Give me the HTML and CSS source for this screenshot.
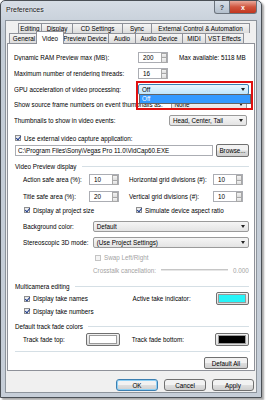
FILE: index.html
```html
<!DOCTYPE html>
<html lang="en">
<head>
  <meta charset="UTF-8" />
  <title>Preferences</title>
  <link rel="stylesheet" href="styles.css">
</head>
<body>
  <div class="win">
    <div class="titlebar">
      <span class="title">Preferences</span>
      <div class="caps">
        <span class="cap help">?</span>
        <span class="cap close">x</span>
      </div>
    </div>

    <div class="client">
      <div class="tabrow r1">
        <span class="tab w24">Editing</span>
        <span class="tab w32">Display</span>
        <span class="tab w51">CD Settings</span>
        <span class="tab w30">Sync</span>
        <span class="tab w99">External Control &amp; Automation</span>
      </div>
      <div class="tabrow r2">
        <span class="tab w30">General</span>
        <span class="tab w28 sel">Video</span>
        <span class="tab w48">Preview Device</span>
        <span class="tab w28">Audio</span>
        <span class="tab w48">Audio Device</span>
        <span class="tab w24">MIDI</span>
        <span class="tab w39">VST Effects</span>
      </div>

      <div class="page">
        <div class="row h14 mt6">
          <span class="lbl">Dynamic RAM Preview max (MB):</span>
          <span class="spin"><span class="val">200</span><span class="arrows"><i></i><i></i></span></span>
          <span class="note">Max available: 5118 MB</span>
        </div>
        <div class="row h14 mt2">
          <span class="lbl">Maximum number of rendering threads:</span>
          <span class="spin"><span class="val">16</span><span class="arrows"><i></i><i></i></span></span>
        </div>
        <div class="row h14 mt2">
          <span class="lbl">GPU acceleration of video processing:</span>
          <span class="combo gpu focus">Off<b></b></span>
        </div>
        <div class="row h14 mt1">
          <span class="lbl clip">Show source frame numbers on event thumbnails as:</span>
          <span class="combo short">None<b></b></span>
        </div>
        <div class="row h14 mt2">
          <span class="lbl">Thumbnails to show in video events:</span>
          <span class="combo short">Head, Center, Tail<b></b></span>
        </div>
        <div class="row h12 mt5">
          <span class="chk on"></span>
          <span>Use external video capture application:</span>
        </div>
        <div class="row h13">
          <span class="edit">C:\Program Files\Sony\Vegas Pro 11.0\VidCap60.EXE</span>
          <span class="btn browse">Browse...</span>
        </div>
        <div class="row h12 mt3 head">
          <span>Video Preview display</span><span class="rule"></span>
        </div>
        <div class="row h13 mt1 ind">
          <span class="lbl2">Action safe area (%):</span>
          <span class="spin"><span class="val">10</span><span class="arrows"><i></i><i></i></span></span>
          <span class="lbl3">Horizontal grid divisions (#):</span>
          <span class="spin"><span class="val">10</span><span class="arrows"><i></i><i></i></span></span>
        </div>
        <div class="row h13 mt4 ind">
          <span class="lbl2">Title safe area (%):</span>
          <span class="spin"><span class="val">20</span><span class="arrows"><i></i><i></i></span></span>
          <span class="lbl3">Vertical grid divisions (#):</span>
          <span class="spin"><span class="val">10</span><span class="arrows"><i></i><i></i></span></span>
        </div>
        <div class="row h12 mt1 ind">
          <span class="half"><span class="chk on"></span>Display at project size</span>
          <span class="chk on"></span><span>Simulate device aspect ratio</span>
        </div>
        <div class="row h13 mt4 ind">
          <span class="lbl4">Background color:</span>
          <span class="combo wide">Default<b></b></span>
        </div>
        <div class="row h13 mt3 ind">
          <span class="lbl4">Stereoscopic 3D mode:</span>
          <span class="combo wide">(Use Project Settings)<b></b></span>
        </div>
        <div class="row h11 mt3 off">
          <span class="sub"><span class="chk"></span>Swap Left/Right</span>
        </div>
        <div class="row h12 mt1 off">
          <span class="sub2">Crosstalk cancellation:</span>
          <span class="slider"></span>
          <span class="num">0.000</span>
        </div>
        <div class="row h12 mt4 head">
          <span>Multicamera editing</span><span class="rule"></span>
        </div>
        <div class="row h13 ind">
          <span class="half"><span class="chk on"></span>Display take names</span>
          <span class="lbl5">Active take indicator:</span>
          <span class="swatch"><i class="cyan"></i></span>
        </div>
        <div class="row h12 ind">
          <span class="chk on"></span><span>Display take numbers</span>
        </div>
        <div class="row h12 mt3 head">
          <span>Default track fade colors</span><span class="rule"></span>
        </div>
        <div class="row h13 mt1 ind">
          <span class="lbl6">Track fade top:</span>
          <span class="swatch"><i class="white"></i></span>
          <span class="lbl7">Track fade bottom:</span>
          <span class="swatch"><i class="black"></i></span>
        </div>
        <div class="sep"></div>
        <div class="row h12 mt5 end">
          <span class="btn defall">Default All</span>
        </div>

        <div class="gpu-list"><span>Off</span></div>
        <div class="mark"></div>
      </div>

      <div class="buttons">
        <span class="btn big default">OK</span>
        <span class="btn big">Cancel</span>
        <span class="btn big">Apply</span>
      </div>
    </div>
  </div>
</body>
</html>
```

FILE: styles.css
```css
body {
  margin: 0;
  width: 266px;
  height: 400px;
  background: #ffffff;
  font-family: "Liberation Sans", Arial, sans-serif;
  font-size: 6.3px;
  color: #000;
  overflow: hidden;
}

.win {
  position: relative;
  width: 260px;
  height: 396px;
  border: 1px solid #4a4f55;
  border-radius: 5px 5px 0 0;
  background: linear-gradient(#d6dde5, #c3ccd6 30px, #c6ced8);
  box-shadow: 2px 2px 2px rgba(0, 0, 0, 0.35);
}

.titlebar {
  height: 19px;
  display: flex;
  align-items: flex-start;
  justify-content: space-between;
}

.title {
  font-size: 7px;
  margin: 5px 0 0 5px;
  color: #1a1a1a;
  text-shadow: 0 0 3px #fff;
}

.caps {
  display: flex;
  margin-right: 4px;
}

.cap {
  height: 12px;
  display: flex;
  align-items: center;
  justify-content: center;
  color: #fff;
  font-weight: bold;
  font-size: 7px;
  border: 1px solid #6b737c;
  border-top: none;
}

.help {
  width: 14px;
  background: linear-gradient(#d7dfe8, #b3bfcc);
  border-radius: 0 0 0 3px;
  color: #3a4450;
}

.close {
  width: 26px;
  background: linear-gradient(#e9a99b, #d0553e 50%, #c2361f);
  border-left: none;
  border-radius: 0 0 3px 0;
}

.client {
  margin: 0 4px;
  height: 371px;
  background: #f0f0f0;
  border: 1px solid #8d949c;
  display: flex;
  flex-direction: column;
}

.tabrow {
  display: flex;
  align-items: flex-end;
}

.r1 {
  margin: 2px 0 0 12px;
  height: 10px;
}

.r2 {
  margin-left: 3px;
  height: 10px;
}

.tab {
  display: flex;
  align-items: center;
  justify-content: center;
  white-space: nowrap;
  background: linear-gradient(#f5f5f5, #dcdcdc);
  border: 1px solid #8e9199;
  border-bottom: none;
  margin-right: -1px;
  box-sizing: border-box;
  height: 10px;
}

.tab.sel {
  position: relative;
  z-index: 2;
  height: 13px;
  margin: -3px -3px -1px -2px;
  background: #fff;
  padding: 0 2px;
}

.w24 { width: 24px; }
.w28 { width: 28px; }
.w30 { width: 30px; }
.w32 { width: 32px; }
.w39 { width: 39px; }
.w48 { width: 48px; }
.w51 { width: 51px; }
.w99 { width: 99px; }

.page {
  position: relative;
  margin-left: 1px;
  width: 248px;
  height: 328px;
  box-sizing: border-box;
  background: #fff;
  border: 1px solid #8e9199;
  padding-left: 6px;
  padding-right: 5px;
}

.row {
  display: flex;
  align-items: center;
  white-space: nowrap;
}

.h11 { height: 11px; }
.h12 { height: 12px; }
.h13 { height: 13px; }
.h14 { height: 14px; }
.mt1 { margin-top: 1px; }
.mt2 { margin-top: 2px; }
.mt3 { margin-top: 3px; }
.mt4 { margin-top: 4px; }
.mt5 { margin-top: 5px; }
.mt6 { margin-top: 6px; }

.ind { padding-left: 9px; }
.end { justify-content: flex-end; }

.lbl { width: 124px; overflow: hidden; }
.lbl.clip { width: 160px; }
.lbl2 { width: 66px; }
.lbl3 { margin-left: 10px; width: 84px; }
.lbl4 { width: 70px; }
.lbl5 { width: 85px; }
.lbl6 { width: 64px; }
.lbl7 { margin-left: 12px; width: 85px; }
.half { width: 112px; display: flex; align-items: center; }

.note { margin-left: 11px; }

.spin {
  width: 30px;
  height: 11px;
  box-sizing: border-box;
  border: 1px solid #abadb3;
  background: #fff;
  display: flex;
}

.spin .val {
  flex: 1;
  padding-left: 4px;
  line-height: 9px;
}

.arrows {
  width: 6px;
  display: flex;
  flex-direction: column;
}

.arrows i {
  flex: 1;
  background: linear-gradient(#f4f4f4, #dcdcdc);
  border: 1px solid #a8a8a8;
  margin: 0 0 -1px 0;
}

.combo {
  position: relative;
  height: 11px;
  box-sizing: border-box;
  border: 1px solid #9a9a9a;
  border-radius: 2px;
  background: linear-gradient(#f5f5f5, #e4e4e4);
  padding-left: 3px;
  display: flex;
  align-items: center;
}

.combo b {
  position: absolute;
  right: 3px;
  top: 3px;
  border-left: 2px solid transparent;
  border-right: 2px solid transparent;
  border-top: 3px solid #222;
}

.combo.gpu {
  width: 112px;
  margin-left: 1px;
}

.combo.focus {
  border-color: #3c7fb1;
  background: linear-gradient(#eaf6fd, #bee6fd);
}

.combo.short {
  width: 78px;
  margin-left: auto;
  margin-right: 2px;
}

.combo.wide {
  width: 157px;
}

.chk {
  width: 6px;
  height: 6px;
  box-sizing: border-box;
  border: 1px solid #8f8f8f;
  background: linear-gradient(#e8e8e8, #fbfbfb);
  margin: 0 3px 0 1px;
  position: relative;
}

.chk.on::after {
  content: "";
  position: absolute;
  left: 1px;
  top: -1px;
  width: 2px;
  height: 4px;
  border-right: 1px solid #1d3a8a;
  border-bottom: 1px solid #1d3a8a;
  transform: rotate(40deg);
}

.off { color: #a3a3a3; }
.off .chk { border-color: #c4c4c4; background: #f4f4f4; }

.sub { padding-left: 80px; display: flex; align-items: center; }
.sub2 { padding-left: 79px; width: 68px; }

.slider {
  width: 67px;
  height: 1px;
  background: #c6c6c6;
  border-bottom: 1px solid #e6e6e6;
}

.num { margin-left: 5px; }

.edit {
  width: 198px;
  height: 11px;
  box-sizing: border-box;
  border: 1px solid #abadb3;
  padding-left: 2px;
  line-height: 9px;
  margin-left: 1px;
}

.btn {
  display: flex;
  align-items: center;
  justify-content: center;
  box-sizing: border-box;
  border: 1px solid #707070;
  border-radius: 2px;
  background: linear-gradient(#f2f2f2 45%, #dddddd 55%, #cfcfcf);
}

.browse {
  width: 33px;
  height: 13px;
  margin-left: 3px;
}

.head span:first-child { margin-left: 1px; }

.rule {
  flex: 1;
  height: 1px;
  background: #d5dfe5;
  margin: 0 0 0 5px;
}

.swatch {
  width: 34px;
  height: 13px;
  box-sizing: border-box;
  border: 1px solid #707070;
  border-radius: 2px;
  background: linear-gradient(#f2f2f2, #dcdcdc);
  display: flex;
  align-items: center;
  justify-content: center;
}

.swatch i {
  width: 26px;
  height: 7px;
  border: 1px solid #9a9a9a;
}

.cyan { background: #28f4f8; }
.white { background: #fff; }
.black { background: #000; }

.sep {
  margin: 5px 0 0 1px;
  width: 235px;
  height: 1px;
  background: #d5dfe5;
}

.defall {
  width: 44px;
  height: 12px;
  margin-right: 1px;
}

.gpu-list {
  position: absolute;
  left: 131px;
  top: 50px;
  width: 112px;
  height: 10px;
  box-sizing: border-box;
  border: 1px solid #646464;
  background: #fff;
}

.gpu-list span {
  display: block;
  height: 8px;
  line-height: 8px;
  background: #3399ff;
  color: #fff;
  padding-left: 2px;
}

.mark {
  position: absolute;
  left: 128px;
  top: 37px;
  width: 117px;
  height: 29px;
  box-sizing: border-box;
  border: 2px solid #e01010;
}

.buttons {
  display: flex;
  justify-content: flex-end;
  gap: 6px;
  margin-top: 8px;
  padding-right: 2px;
}

.btn.big {
  width: 42px;
  height: 12px;
  border-radius: 3px;
}

.btn.default {
  border-color: #3c7fb1;
  box-shadow: inset 0 0 0 1px #8ed0f5;
}
```
